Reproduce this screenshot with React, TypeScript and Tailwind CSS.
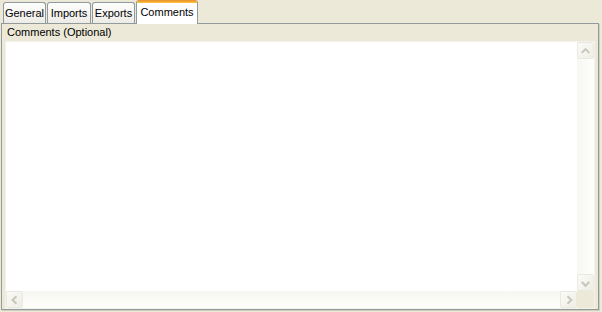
function Tab({ label, width }: { label: string; width: string }) {
  return (
    <div
      className={`mr-px flex h-[21px] items-center justify-center rounded-t-[3px] border border-b-0 border-[#919b9c] bg-gradient-to-b from-[#fefefe] to-[#ecebe6] ${width}`}
    >
      {label}
    </div>
  );
}

function ArrowButton({ dir }: { dir: "up" | "down" | "left" | "right" }) {
  const paths: Record<string, string> = {
    up: "M4 10 L8 6 L12 10",
    down: "M4 7 L8 11 L12 7",
    left: "M10 4 L6 8 L10 12",
    right: "M7 4 L11 8 L7 12",
  };
  return (
    <div className="flex h-[17px] w-[17px] shrink-0 items-center justify-center rounded-[2px] border border-[#e9e8e1] bg-gradient-to-br from-[#fbfbf7] to-[#eeede5]">
      <svg width="16" height="16" viewBox="0 0 16 16">
        <path d={paths[dir]} fill="none" stroke="#c9c7ba" strokeWidth="2.2" />
      </svg>
    </div>
  );
}

export default function App() {
  return (
    <div
      className="h-[312px] w-[602px] overflow-hidden bg-[#ece9d8] text-[11px] text-black"
      style={{ fontFamily: '"Liberation Sans", Arial, sans-serif' }}
    >
      <div className="flex h-[23px] items-end pl-[3px]">
        <Tab label="General" width="w-[43px]" />
        <Tab label="Imports" width="w-[44px]" />
        <Tab label="Exports" width="w-[43px]" />
        <div className="relative z-10 -mb-px flex h-[24px] w-[62px] flex-col overflow-hidden rounded-t-[3px] border-x border-[#919b9c] bg-white">
          <div className="h-[3px] shrink-0 bg-gradient-to-b from-[#e68b2c] to-[#ffc73c]" />
          <div className="flex flex-1 items-start justify-center pt-[1px]">Comments</div>
        </div>
      </div>
      <div className="ml-px flex h-[287px] w-[598px] flex-col border border-[#919b9c] bg-[#ece9d8] shadow-[1px_1px_0_#d0cebf]">
        <div className="h-[17px] pl-[5px] pt-[2px] leading-[13px]">Comments (Optional)</div>
        <div className="mx-[3px] flex flex-1 flex-col border border-[#f2f1ea] bg-white">
          <div className="flex flex-1">
            <div className="flex-1" />
            <div className="flex w-[17px] flex-col bg-gradient-to-r from-[#f7f7f2] to-[#fefefb]">
              <ArrowButton dir="up" />
              <div className="flex-1" />
              <ArrowButton dir="down" />
            </div>
          </div>
          <div className="flex h-[17px]">
            <div className="flex flex-1 bg-gradient-to-b from-[#f7f7f2] to-[#fefefb]">
              <ArrowButton dir="left" />
              <div className="flex-1" />
              <ArrowButton dir="right" />
            </div>
            <div className="w-[17px] bg-[#ece9d8]" />
          </div>
        </div>
      </div>
    </div>
  );
}
